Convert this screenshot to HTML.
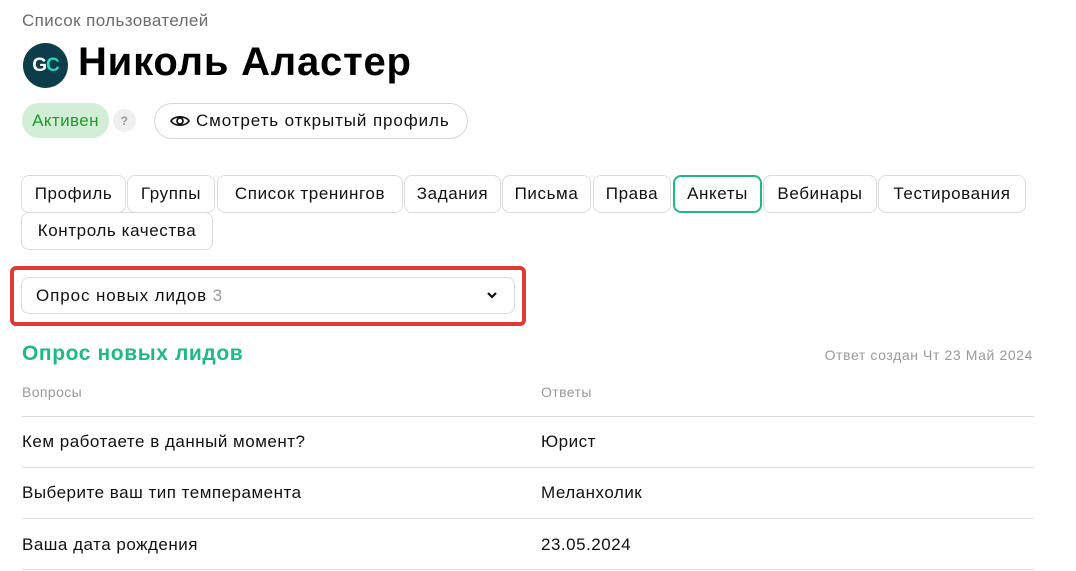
<!DOCTYPE html>
<html><head><meta charset="utf-8"><style>
*{margin:0;padding:0;box-sizing:border-box}
body{width:1076px;height:571px;background:#fff;font-family:"Liberation Sans","DejaVu Sans",sans-serif;color:#111;position:relative;overflow:hidden;letter-spacing:0.4px}
.a{position:absolute}
.tab{position:absolute;height:38px;border:1px solid #dcdcdc;border-radius:8px;font-size:17px;display:flex;align-items:center;justify-content:center;color:#111;background:#fff;letter-spacing:0.6px}
.line{position:absolute;left:22px;width:1012px;height:1px;background:#dcdcdc}
.q{position:absolute;left:22px;font-size:17px;letter-spacing:0.5px}
.ans{position:absolute;left:541px;font-size:17px;letter-spacing:0.5px}
</style></head><body>
<div class="a" style="left:22px;top:11px;font-size:17px;color:#6b6b6b">Список пользователей</div>
<div class="a" style="left:23px;top:43px;width:45px;height:45px;border-radius:50%;background:#0d3d4a;color:#fff;font-weight:bold;font-size:19px;display:flex;align-items:center;justify-content:center;letter-spacing:-1px">G<span style="color:#2dd4b5">C</span></div>
<div class="a" style="left:78px;top:40px;font-size:40px;font-weight:bold;color:#000;letter-spacing:0.8px">Николь Аластер</div>
<div class="a" style="left:22px;top:103px;width:87px;height:35px;border-radius:17px;background:#d2eed6;color:#1e9a28;font-size:17px;display:flex;align-items:center;justify-content:center">Активен</div>
<div class="a" style="left:113px;top:109px;width:23px;height:23px;border-radius:50%;background:#efefef;color:#999;font-size:12px;display:flex;align-items:center;justify-content:center;font-weight:bold">?</div>
<div class="a" style="left:154px;top:103px;width:314px;height:36px;border:1px solid #d6d6d6;border-radius:18px;font-size:17px;display:flex;align-items:center;padding-left:15px;letter-spacing:0.9px">
<svg width="20" height="14" viewBox="0 0 20 14" style="margin-right:6px"><path d="M1 7C4 1.5 16 1.5 19 7C16 12.5 4 12.5 1 7Z" fill="none" stroke="#111" stroke-width="1.7"/><circle cx="10" cy="7" r="3" fill="none" stroke="#111" stroke-width="1.7"/></svg>Смотреть открытый профиль</div>

<div class="tab" style="left:21px;top:175px;width:105px">Профиль</div>
<div class="tab" style="left:127px;top:175px;width:88px">Группы</div>
<div class="tab" style="left:217px;top:175px;width:186px">Список тренингов</div>
<div class="tab" style="left:404px;top:175px;width:97px">Задания</div>
<div class="tab" style="left:502px;top:175px;width:89px">Письма</div>
<div class="tab" style="left:593px;top:175px;width:78px">Права</div>
<div class="tab" style="left:673px;top:175px;width:89px;border:2px solid #1fb985">Анкеты</div>
<div class="tab" style="left:763px;top:175px;width:114px">Вебинары</div>
<div class="tab" style="left:878px;top:175px;width:148px">Тестирования</div>
<div class="tab" style="left:21px;top:212px;width:192px">Контроль качества</div>

<div class="a" style="left:10px;top:266px;width:516px;height:60px;border:4px solid #e23a30;border-radius:6px"></div>
<div class="a" style="left:21px;top:277px;width:494px;height:37px;border:1px solid #dcdcdc;border-radius:8px;font-size:17px;display:flex;align-items:center;padding-left:14px;letter-spacing:0.9px">Опрос новых лидов&nbsp;<span style="color:#999">3</span>
<svg class="a" style="right:16px;top:13px" width="12" height="9" viewBox="0 0 12 9"><path d="M2 2L6 6L10 2" fill="none" stroke="#111" stroke-width="2.2"/></svg></div>

<div class="a" style="left:22px;top:342px;font-size:21px;font-weight:bold;color:#1fb985;letter-spacing:0.6px">Опрос новых лидов</div>
<div class="a" style="right:43px;top:347px;font-size:14px;color:#999;letter-spacing:0.6px">Ответ создан Чт 23 Май 2024</div>
<div class="a" style="left:22px;top:384px;font-size:14px;color:#999">Вопросы</div>
<div class="a" style="left:541px;top:384px;font-size:14px;color:#999">Ответы</div>
<div class="line" style="top:416px"></div>
<div class="q" style="top:432px">Кем работаете в данный момент?</div><div class="ans" style="top:432px">Юрист</div>
<div class="line" style="top:467px"></div>
<div class="q" style="top:483px">Выберите ваш тип темперамента</div><div class="ans" style="top:483px">Меланхолик</div>
<div class="line" style="top:518px"></div>
<div class="q" style="top:535px">Ваша дата рождения</div><div class="ans" style="top:535px">23.05.2024</div>
<div class="line" style="top:569px"></div>
</body></html>
